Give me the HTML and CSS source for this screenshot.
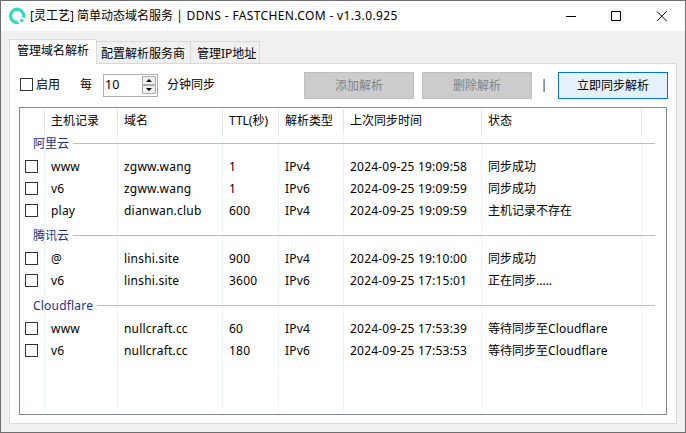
FILE: index.html
```html
<!DOCTYPE html>
<html lang="zh-CN">
<head>
<meta charset="utf-8">
<title>DDNS</title>
<link rel="stylesheet" href="styles.css">
</head>
<body>
<div class="window">
  <header class="titlebar">
    <svg class="logo" width="18" height="18" viewBox="0 0 18 18"><path d="M15.500 10.600A6.600 6.600 0 1 0 10.600 15.300" fill="none" stroke="#34d9c3" stroke-width="3.3"/><circle cx="13.700" cy="13.500" r="1.800" fill="#34d9c3"/></svg>
    <h1 class="title">[灵工艺] 简单动态域名服务 <span class="title-latin">| DDNS - FASTCHEN.COM - v1.3.0.925</span></h1>
    <svg class="controls" width="102" height="12" viewBox="0 0 102 12" fill="none" stroke="#000" stroke-width="1"><path d="M0 6.500H10M45.500 1.500H54.500V10.500H45.500ZM91 1.500L100.500 11M100.500 1.500L91 11"/></svg>
  </header>
  <nav class="tabs">
    <div class="tab active">管理域名解析</div>
    <div class="tab second">配置解析服务商</div>
    <div class="tab third">管理IP地址</div>
  </nav>
  <main class="panel">
    <div class="toolbar">
      <i class="check"></i><span class="enable">启用</span><span class="every">每</span>
      <div class="spinner"><span class="value">10</span>
        <svg width="14" height="18" viewBox="0 0 14 18"><path d="M.5 .5H13.500V8.500H.5ZM.5 9.500H13.500V17.500H.5Z" fill="#f0f0f0" stroke="#acacac"/><path d="M4 6L7 3L10 6ZM4 12H10L7 15Z" fill="#000"/></svg>
      </div>
      <span class="minutes">分钟同步</span>
      <button class="btn" disabled>添加解析</button>
      <button class="btn" disabled>删除解析</button>
      <span class="divider"></span>
      <button class="btn primary">立即同步解析</button>
    </div>
    <section class="list">
      <div class="row head"><span></span><span>主机记录</span><span>域名</span><span>TTL(秒)</span><span>解析类型</span><span>上次同步时间</span><span>状态</span></div>
      <div class="group first"><span>阿里云</span></div>
      <div class="row"><i class="check"></i><span>www</span><span>zgww.wang</span><span>1</span><span>IPv4</span><span>2024-09-25 19:09:58</span><span class="cjk">同步成功</span></div>
      <div class="row"><i class="check"></i><span>v6</span><span>zgww.wang</span><span>1</span><span>IPv6</span><span>2024-09-25 19:09:59</span><span class="cjk">同步成功</span></div>
      <div class="row"><i class="check"></i><span>play</span><span>dianwan.club</span><span>600</span><span>IPv4</span><span>2024-09-25 19:09:59</span><span class="cjk">主机记录不存在</span></div>
      <div class="group"><span>腾讯云</span></div>
      <div class="row"><i class="check"></i><span>@</span><span>linshi.site</span><span>900</span><span>IPv4</span><span>2024-09-25 19:10:00</span><span class="cjk">同步成功</span></div>
      <div class="row"><i class="check"></i><span>v6</span><span>linshi.site</span><span>3600</span><span>IPv6</span><span>2024-09-25 17:15:01</span><span class="cjk">正在同步.....</span></div>
      <div class="group"><span class="latin">Cloudflare</span></div>
      <div class="row"><i class="check"></i><span>www</span><span>nullcraft.cc</span><span>60</span><span>IPv4</span><span>2024-09-25 17:53:39</span><span class="cjk">等待同步至<b>Cloudflare</b></span></div>
      <div class="row"><i class="check"></i><span>v6</span><span>nullcraft.cc</span><span>180</span><span>IPv6</span><span>2024-09-25 17:53:53</span><span class="cjk">等待同步至<b>Cloudflare</b></span></div>
    </section>
  </main>
</div>
</body>
</html>
```
FILE: styles.css
```css
* { box-sizing: border-box; }
body { margin: 0; font: 12px/18px "Noto Sans", "Noto Sans CJK SC", sans-serif; color: #000; }
.window { width: 686px; height: 433px; border: 1px solid #6e6e6e; background: #f0f0f0; }
.titlebar { height: 30px; background: #fff; display: flex; align-items: center; padding: 0 17px 0 7px; }
.title { margin: 0 0 0 4px; font-size: 12px; font-weight: 400; white-space: nowrap; }
.title-latin { letter-spacing: .36px; }
.controls { margin-left: auto; }
.tabs { display: flex; align-items: flex-end; height: 32px; padding-left: 8px; }
.tab { height: 22px; border: 1px solid #d9d9d9; border-bottom: 0; border-left: 0; white-space: nowrap; padding-top: 3px; }
.tab.active { position: relative; width: 88px; height: 25px; margin-bottom: -1px; padding: 2px 0 0 7px; border-left: 1px solid #d9d9d9; background: #fff; }
.second { width: 94px; padding-left: 4px; }
.third { width: 69px; padding-left: 6px; }
.panel { width: 668px; height: 361px; margin-left: 8px; background: #fff; border: 1px solid #d9d9d9; }
.toolbar { height: 43px; padding: 8px 8px 0 10px; display: flex; align-items: flex-start; white-space: nowrap; }
.check { width: 13px; height: 13px; border: 1px solid #333; background: #fff; }
.toolbar .check { margin-top: 6px; }
.enable, .every, .minutes { margin-top: 4px; }
.enable { width: 44px; margin-left: 3px; }
.every { width: 23px; }
.spinner { width: 55px; height: 23px; margin-top: 2px; border: 1px solid #abadb3; display: flex; justify-content: space-between; padding: 1px 1px 0 1px; }
.value { font-size: 12.5px; line-height: 18px; }
.minutes { width: 137px; margin-left: 9px; }
.btn { width: 110px; height: 27px; padding: 0; font: inherit; border: 1px solid #bfbfbf; background: #ccc; color: #838383; margin-right: 8px; }
.btn.primary { border-color: #0078d7; background: #e5f1fb; color: #000; margin: 0; }
.divider { width: 2px; height: 13px; margin: 7px 13px 0 3px; background: linear-gradient(90deg, #c9a58e 50%, #7893c4 50%); }
.list {
  --line: #eaf3fc;
  width: 648px; height: 308px; margin-left: 9px; border: 1px solid #828790;
  background: linear-gradient(var(--line) 0 0) 24px 25px / 1px 279px, linear-gradient(var(--line) 0 0) 97px 25px / 1px 279px, linear-gradient(var(--line) 0 0) 202px 25px / 1px 279px, linear-gradient(var(--line) 0 0) 258px 25px / 1px 279px, linear-gradient(var(--line) 0 0) 323px 25px / 1px 279px, linear-gradient(var(--line) 0 0) 461px 25px / 1px 279px, linear-gradient(var(--line) 0 0) 621px 25px / 1px 279px;
  background-repeat: no-repeat;
}
.row { display: grid; grid-template-columns: 25px 73px 105px 56px 65px 138px 160px; height: 22px; align-items: center; white-space: nowrap; letter-spacing: .2px; }
.row > span { padding-left: 6px; }
.row > .check { margin: 0 0 2px 5px; }
.row .cjk { letter-spacing: 0; }
.row b { font-weight: 400; letter-spacing: .15px; }
.head { height: 25px; padding-top: 1px; align-items: stretch; letter-spacing: 0; line-height: 23px; }
.head span { border-right: 1px solid #e5e5e5; }
.group { height: 26px; padding: 0 11px 0 13px; display: flex; align-items: flex-start; color: #1e3287; }
.group span { line-height: 18px; padding-top: 5px; }
.group::after { content: ""; flex: 1; height: 1px; margin: 13px 0 0 4px; background: #b0bedb; }
.group.first { height: 23px; }
.group.first span { padding-top: 2px; }
.group.first::after { margin-top: 10px; }
.latin { letter-spacing: .2px; }
```
